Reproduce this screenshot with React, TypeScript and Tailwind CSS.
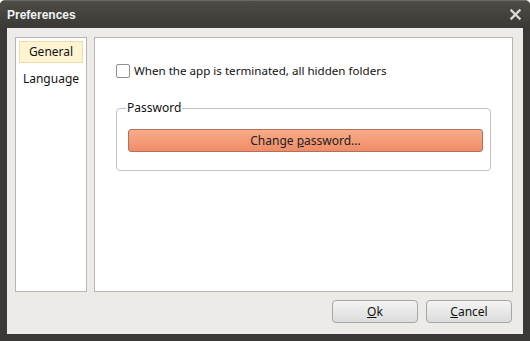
export default function App() {
  return (
    <div className="w-[530px] h-[341px] bg-[#3a3935] flex flex-col rounded-t-[5px] border-t border-[#6a6964] overflow-hidden" style={{ fontFamily: '"Noto Sans", "Liberation Sans", sans-serif' }}>
      {/* Title bar */}
      <div className="h-[27px] flex items-center justify-between pl-[7px] pr-[9px] bg-gradient-to-b from-[#4d4c47] to-[#3a3935]">
        <span className="text-[12px] font-bold text-[#f2f2f2] leading-none" style={{ fontFamily: '"Liberation Sans", sans-serif' }}>Preferences</span>
        <svg width="11" height="11" viewBox="0 0 11 11">
          <path d="M1.5 1.5 L9.5 9.5 M9.5 1.5 L1.5 9.5" stroke="#d8d8d4" strokeWidth="2.4" strokeLinecap="square" />
        </svg>
      </div>

      {/* Body */}
      <div className="mx-[7px] mb-[7px] flex-1 bg-[#edebe7] flex flex-col pt-[9px] pl-[8px] pr-[10px]">
        <div className="flex gap-[7px] h-[255px]">
          {/* Sidebar */}
          <div className="w-[72px] bg-white border border-[#b9b6b1] flex flex-col items-center pt-[3px] gap-[5px]">
            <div className="w-[64px] h-[22px] bg-[#fff4d1] border border-[#f3dba3] flex items-center justify-center text-[12px] text-[#111]">General</div>
            <div className="w-[64px] h-[22px] flex items-center justify-center text-[12px] text-[#111]">Language</div>
          </div>

          {/* Main panel */}
          <div className="flex-1 bg-white border border-[#b9b6b1] pl-[21px] pr-[21px] pt-[24px]">
            <label className="flex items-center gap-[4px] text-[11.6px] text-[#111]">
              <span className="w-[14px] h-[14px] border border-[#8f8f8f] rounded-[2px] bg-white" />
              When the app is terminated, all hidden folders
            </label>

            <div className="relative mt-[29px] h-[63px] border border-[#c4c2bf] rounded-[4px] pl-[11px] pr-[7px] pt-[20px]">
              <span className="absolute -top-[8px] left-[9px] bg-white px-[1px] text-[12px] leading-[14px] text-[#111]">Password</span>
              <button className="w-full h-[23px] rounded-[3px] border border-[#b3705a] bg-gradient-to-b from-[#f9ab88] to-[#ef8d68] text-[12px] text-[#222] flex items-center justify-center">
                Change&nbsp;<span className="underline">p</span>assword...
              </button>
            </div>
          </div>
        </div>

        {/* Footer buttons */}
        <div className="flex justify-end gap-[8px] mt-[8px] pr-[1px]">
          <button className="w-[86px] h-[23px] rounded-[4px] border border-[#a6a6a6] bg-gradient-to-b from-[#f4f4f4] to-[#dcdcdc] text-[12px] text-[#111]">
            <span className="underline">O</span>k
          </button>
          <button className="w-[86px] h-[23px] rounded-[4px] border border-[#a6a6a6] bg-gradient-to-b from-[#f4f4f4] to-[#dcdcdc] text-[12px] text-[#111]">
            <span className="underline">C</span>ancel
          </button>
        </div>
      </div>
    </div>
  )
}
